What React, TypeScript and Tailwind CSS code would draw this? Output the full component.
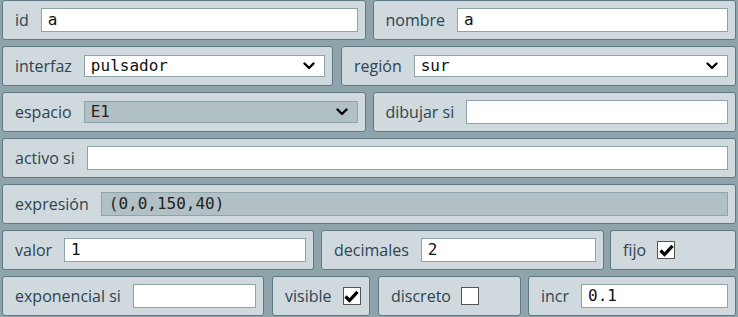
import React from 'react';

const Chevron = () => (
  <svg width="12" height="8" viewBox="0 0 12 8" className="shrink-0">
    <polyline points="1.5,1.5 6,6 10.5,1.5" fill="none" stroke="#000" strokeWidth="2.4" strokeLinecap="round" strokeLinejoin="round" />
  </svg>
);

const Check = ({ checked }: { checked: boolean }) => (
  <span className="w-[18px] h-[18px] bg-white border border-[#555] flex items-center justify-center shrink-0">
    {checked && (
      <svg width="15" height="13" viewBox="0 0 15 13">
        <polyline points="1.5,6.5 5.5,10.5 13.5,1.8" fill="none" stroke="#000" strokeWidth="3.2" strokeLinejoin="miter" />
      </svg>
    )}
  </span>
);

const Panel: React.FC<{ className?: string; children: React.ReactNode }> = ({ className = '', children }) => (
  <div
    className={`h-[40px] flex items-center bg-[#d0d9de] border border-[#5f7a84] rounded-[3px] pl-[12px] pr-[7px] ${className}`}
  >
    {children}
  </div>
);

const Label = ({ text }: { text: string }) => (
  <span className="mr-[12px] whitespace-nowrap text-[16px] text-[#2e4450]">{text}</span>
);

const Field = ({ value = '' }: { value?: string }) => (
  <div className="flex-1 h-[24px] bg-white border border-[#8fa3aa] pl-[6px] flex items-center font-['DejaVu_Sans_Mono',monospace] text-[16px] text-[#111]">
    {value}
  </div>
);

const Select = ({ value, disabled = false }: { value: string; disabled?: boolean }) => (
  <div
    className={`flex-1 h-[22px] border border-[#8fa3aa] pl-[6px] pr-[9px] flex items-center justify-between font-['DejaVu_Sans_Mono',monospace] text-[16px] ${
      disabled ? 'bg-[#b1c0c5] text-[#2a1a1a]' : 'bg-white text-[#111]'
    }`}
  >
    <span>{value}</span>
    <Chevron />
  </div>
);

export default function App() {
  return (
    <div className="w-[738px] h-[317px] bg-[#8fa3ab] px-[2px] flex flex-col gap-[6px] font-['Open_Sans',sans-serif] overflow-hidden">
      <div className="flex gap-[7px]">
        <Panel className="flex-1">
          <Label text="id" />
          <Field value="a" />
        </Panel>
        <Panel className="flex-1">
          <Label text="nombre" />
          <Field value="a" />
        </Panel>
      </div>

      <div className="flex gap-[8px]">
        <Panel className="w-[331px]">
          <Label text="interfaz" />
          <Select value="pulsador" />
        </Panel>
        <Panel className="flex-1">
          <Label text="región" />
          <Select value="sur" />
        </Panel>
      </div>

      <div className="flex gap-[7px]">
        <Panel className="flex-1">
          <Label text="espacio" />
          <Select value="E1" disabled />
        </Panel>
        <Panel className="flex-1">
          <Label text="dibujar si" />
          <Field />
        </Panel>
      </div>

      <Panel>
        <Label text="activo si" />
        <Field />
      </Panel>

      <Panel>
        <Label text="expresión" />
        <div className="flex-1 h-[24px] bg-[#b1c0c5] border border-[#8fa3aa] pl-[7px] flex items-center font-['DejaVu_Sans_Mono',monospace] text-[16px] text-[#222]">
          (0,0,150,40)
        </div>
      </Panel>

      <div className="flex gap-[7px]">
        <Panel className="w-[312px]">
          <Label text="valor" />
          <Field value="1" />
        </Panel>
        <Panel className="w-[283px] -mr-[1px]">
          <Label text="decimales" />
          <Field value="2" />
        </Panel>
        <Panel className="flex-1 pl-[8px]">
          <span className="mr-[11px] text-[16px] text-[#2e4450]">fijo</span>
          <Check checked />
        </Panel>
      </div>

      <div className="flex gap-[8px]">
        <Panel className="w-[262px]">
          <Label text="exponencial si" />
          <Field />
        </Panel>
        <Panel className="w-[98px]">
          <span className="mr-[11px] text-[16px] text-[#2e4450]">visible</span>
          <Check checked />
        </Panel>
        <Panel className="w-[143px] -mr-[1px]">
          <span className="mr-[10px] text-[16px] text-[#2e4450]">discreto</span>
          <Check checked={false} />
        </Panel>
        <Panel className="flex-1">
          <Label text="incr" />
          <Field value="0.1" />
        </Panel>
      </div>
    </div>
  );
}
